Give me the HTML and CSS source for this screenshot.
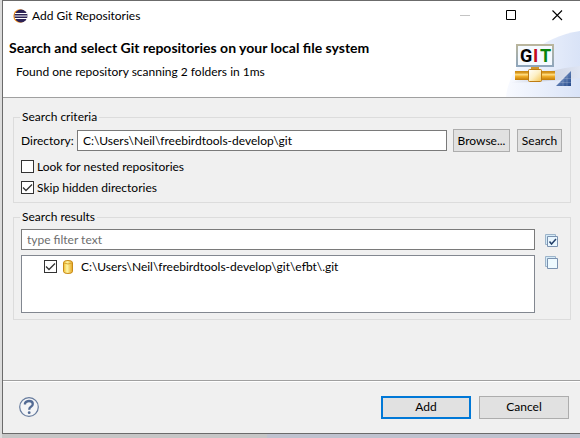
FILE: index.html
```html
<!DOCTYPE html>
<html lang="en">
<head>
<meta charset="utf-8">
<title>Add Git Repositories</title>
<link rel="stylesheet" href="styles.css">
</head>
<body>
<main class="dialog">
  <header class="banner">
    <div class="titlebar">
      <svg class="app-icon" width="15" height="14" viewBox="0 0 15 14" aria-hidden="true">
        <circle cx="7" cy="7" r="6.7" fill="#f7941e"/>
        <circle cx="8" cy="7" r="6.5" fill="#2c2255"/>
        <path d="M2 4.500h12M1.500 7h13M2 9.500h12" stroke="#fff" stroke-width="1"/>
      </svg>
      <span class="caption">Add Git Repositories</span>
      <button class="win-btn" aria-label="Minimize"><svg width="11" height="11" viewBox="0 0 11 11"><path d="M0 5.500h10" stroke="#c4c4c4"/></svg></button>
      <button class="win-btn" aria-label="Maximize"><svg width="11" height="11" viewBox="0 0 11 11"><path d="M.5.5h9v9h-9z" fill="none" stroke="#000"/></svg></button>
      <button class="win-btn" aria-label="Close"><svg width="11" height="11" viewBox="0 0 11 11"><path d="M.5.5l9.500 9.500M10 .5L.5 10" stroke="#000" stroke-width="1.100"/></svg></button>
    </div>
    <h1 class="heading">Search and select Git repositories on your local file system</h1>
    <p class="message">Found one repository scanning 2 folders in 1ms</p>
    <svg class="git-art" width="76" height="68" viewBox="0 0 76 68" role="img" aria-label="Git">
      <defs>
        <linearGradient id="sky" x1="0" y1="0" x2="1" y2="0"><stop offset="0" stop-color="#f8faff"/><stop offset="1" stop-color="#d9e3f7"/></linearGradient>
        <linearGradient id="haze" x1="0" y1="0" x2="1" y2="0"><stop offset="0" stop-color="#c9cfde" stop-opacity="0"/><stop offset=".45" stop-color="#c6cbd8" stop-opacity=".75"/><stop offset="1" stop-color="#dfe5f3"/></linearGradient>
        <linearGradient id="bar" x1="0" y1="0" x2="0" y2="1"><stop offset="0" stop-color="#c98712"/><stop offset=".2" stop-color="#d99a20"/><stop offset=".4" stop-color="#ffdc80"/><stop offset=".6" stop-color="#f0ad28"/><stop offset="1" stop-color="#c17b08"/></linearGradient>
        <linearGradient id="node" x1="0" y1="0" x2="1" y2="1"><stop offset="0" stop-color="#fff"/><stop offset=".5" stop-color="#fdf0c6"/><stop offset="1" stop-color="#f4c451"/></linearGradient>
        <linearGradient id="sign" x1="0" y1="0" x2="0" y2="1"><stop offset="0" stop-color="#b9b59c"/><stop offset="1" stop-color="#8fa6bc"/></linearGradient>
        <linearGradient id="corner" x1="0" y1="0" x2="1" y2="1"><stop offset="0" stop-color="#8faad5"/><stop offset="1" stop-color="#24498b"/></linearGradient>
      </defs>
      <path d="M2 68C5 38 32 9 76 2v66z" fill="url(#sky)"/>
      <path d="M6 54Q45 40 76 37v12Q42 53 6 54z" fill="url(#haze)"/>
      <rect x="27" y="38" width="8" height="5" fill="#d1972d"/>
      <rect x="13" y="16" width="36" height="21" fill="#f5faff" stroke="url(#sign)" stroke-width="2"/>
      <g font-family="Roboto, sans-serif" font-size="18" font-weight="700">
        <text x="16" y="33" fill="#050505">G</text>
        <text x="29" y="33" fill="#c20b20">I</text>
        <text x="36" y="33" fill="#07830d">T</text>
      </g>
      <rect x="11" y="42" width="40" height="9" fill="url(#bar)"/>
      <rect x="24.500" y="40.500" width="13" height="12" rx="1" fill="url(#node)" stroke="#bd7b12"/>
      <path d="M67 42v15H52z" fill="url(#corner)"/>
      <path d="M59 49.500v7.500M63 46.500v10.500M54 53.500h13M58 49.500h9" stroke="#fff" stroke-opacity=".18"/>
    </svg>
  </header>

  <div class="content">
    <fieldset class="group criteria">
      <legend>Search criteria</legend>
      <div class="dir-row">
        <label for="dir">Directory:</label>
        <input class="field" id="dir" type="text" value="C:\Users\Neil\freebirdtools-develop\git">
        <button class="btn browse">Browse...</button>
        <button class="btn search">Search</button>
      </div>
      <label class="check-row"><input class="check" type="checkbox">Look for nested repositories</label>
      <label class="check-row"><input class="check" type="checkbox" checked>Skip hidden directories</label>
    </fieldset>

    <fieldset class="group results">
      <legend>Search results</legend>
      <div class="results-grid">
        <div class="result-main">
          <input class="field filter" type="text" placeholder="type filter text" aria-label="Filter">
          <div class="tree">
            <label class="tree-row">
              <input class="check" type="checkbox" checked>
              <svg class="repo-icon" width="10" height="14" viewBox="0 0 10 14" aria-hidden="true">
                <defs><linearGradient id="gold" x1="0" y1="0" x2="1" y2="0"><stop offset="0" stop-color="#efba2b"/><stop offset=".4" stop-color="#fff7a8"/><stop offset="1" stop-color="#e5a51f"/></linearGradient></defs>
                <path d="M.5 2.500Q.5.5 5 .5t4.500 2v9q0 2-4.500 2t-4.500-2z" fill="url(#gold)" stroke="#c88a18"/>
                <path d="M1 3q4 2 8 0" fill="none" stroke="#d9a42c"/>
              </svg>
              <span>C:\Users\Neil\freebirdtools-develop\git\efbt\.git</span>
            </label>
          </div>
        </div>
        <div class="tools">
          <button class="tool" aria-label="Select all"><svg width="13" height="13" viewBox="0 0 13 13"><path d="M.5.5h10v10H.5z" fill="#d5ebf7" stroke="#9db4ca"/><path d="M2.500 2.500h10v10h-10z" fill="#eaf7ff" stroke="#7b92b0"/><path d="M4.500 7.500L6.500 10 11 5" fill="none" stroke="#243f68" stroke-width="1.500"/></svg></button>
          <button class="tool" aria-label="Deselect all"><svg width="13" height="13" viewBox="0 0 13 13"><path d="M.5.5h10v10H.5z" fill="#d5ebf7" stroke="#9db4ca"/><path d="M2.500 2.500h10v10h-10z" fill="#eefaff" stroke="#7b92b0"/></svg></button>
        </div>
      </div>
    </fieldset>
  </div>

  <footer class="footer">
    <button class="help" aria-label="Help"><svg width="20" height="20" viewBox="0 0 20 20"><circle cx="10" cy="10" r="9.300" fill="#f4f5f7" stroke="#667b9d" stroke-width="1.200"/><path d="M6 7.500V6.200Q7.200 4 10 4q3.800 0 3.800 2.900 0 1.600-1.900 2.900-1.700 1.100-1.700 2.900" fill="none" stroke="#536b94" stroke-width="2.300"/><circle cx="10.200" cy="15.700" r="1.400" fill="#536b94"/></svg></button>
    <button class="btn action default">Add</button>
    <button class="btn action">Cancel</button>
  </footer>
</main>
</body>
</html>
```

FILE: styles.css
```css
* { box-sizing: border-box; }

body {
  margin: 0;
  min-height: 100vh;
  padding: 0 0 4px 2px;
  display: flex;
  overflow: hidden;
  background: linear-gradient(90deg, #dcdcdc 2px, #c6c6c6 2px 46%, #bfc2cf 46%);
  color: #000;
  font: 12px/16px Lato, sans-serif;
}

button, input { font: inherit; color: inherit; }
button { padding: 0; }

.dialog {
  flex: 1;
  min-width: 0;
  display: flex;
  flex-direction: column;
  border: solid #6b6b6b;
  border-width: 1px 0 1px 1px;
  background: #f0f0f0;
}

.banner {
  position: relative;
  height: 97px;
  background: #fff;
  border-bottom: 1px solid #a0a0a0;
}

.titlebar { display: flex; align-items: center; height: 29px; padding-left: 10px; }
.caption { flex: 1; margin-left: 4px; }
.win-btn { display: flex; justify-content: center; align-items: center; width: 46px; height: 29px; border: 0; background: none; }
.heading { margin: 10px 0 0 6px; font-size: 14px; line-height: 16px; font-weight: 700; }
.message { margin: 8px 0 0 13px; }
.git-art { position: absolute; right: 0; bottom: 0; }

.content { flex: 1; padding: 11px 9px 0 10px; }

.group { min-width: 0; margin: 0; padding: 0 8px 0 7px; border: 1px solid #dcdcdc; }
.group legend { margin-left: -1px; padding: 0 2px; line-height: 16px; }
.criteria { padding-bottom: 4px; }
.results { margin-top: 6px; padding-bottom: 6px; }

.dir-row { display: flex; align-items: center; margin: 4px 0; }
.dir-row label { width: 56px; }
.field { height: 21px; min-width: 0; padding: 0 5px; border: 1px solid #7a7a7a; border-radius: 0; background: #fff; }
.dir-row .field { flex: 1; }
.field::placeholder { color: #6d6d6d; opacity: 1; }
.btn { height: 23px; border: 1px solid #adadad; border-radius: 0; background: #e1e1e1; }
.browse { width: 57px; margin-left: 6px; }
.search { width: 45px; margin-left: 7px; }

.check-row { display: flex; align-items: center; gap: 3px; height: 21px; }
.check { appearance: none; flex: none; width: 13px; height: 13px; margin: 0; border: 1px solid #333; background: #fff; }
.check:checked { background: #fff url("data:image/svg+xml,%3Csvg xmlns='http://www.w3.org/2000/svg' viewBox='0 0 11 11'%3E%3Cpath d='M1 5.500L4 8.500L10 2.500' fill='none' stroke='%23333' stroke-width='1.300'/%3E%3C/svg%3E"); }

.results-grid { display: flex; margin-top: 4px; }
.result-main { flex: 1; min-width: 0; display: flex; flex-direction: column; gap: 5px; }
.tree { height: 58px; padding: 2px 0 0 22px; border: 1px solid #828790; background: #fff; }
.tree-row { display: flex; align-items: center; height: 17px; }
.repo-icon { margin: 0 8px 0 6px; }
.tools { display: flex; flex-direction: column; gap: 9px; padding: 5px 4px 0 10px; }
.tool { display: flex; width: 13px; height: 13px; border: 0; background: none; }

.footer { display: flex; align-items: center; height: 53px; padding: 0 11px 0 16px; border-top: 1px solid #a0a0a0; box-shadow: inset 0 1px #fff; }
.help { display: flex; width: 20px; height: 20px; margin-right: auto; border: 0; background: none; }
.action { width: 90px; margin-left: 8px; }
.default { border: 2px solid #0078d7; }
```
